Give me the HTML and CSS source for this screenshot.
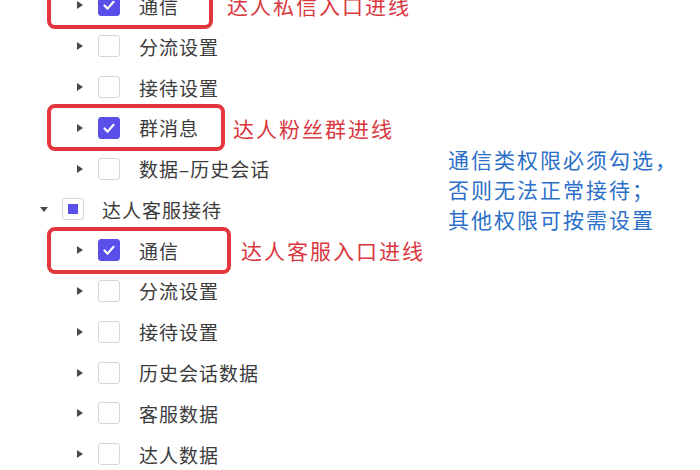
FILE: index.html
```html
<!DOCTYPE html>
<html>
<head>
  <meta charset="utf-8">
  <title>权限设置</title>
  <link rel="stylesheet" href="styles.css">
</head>
<body>
  <div class="page">
    <div class="tree">
      <div class="row child">
        <div class="item marked w-a">
          <span class="caret"></span>
          <span class="check on"><svg viewBox="0 0 22 22"><polyline points="6,11.5 9.5,15 16,7.5"/></svg></span>
          <span class="label">通信</span>
        </div>
        <span class="note gap-a">达人私信入口进线</span>
      </div>
      <div class="row child">
        <div class="item">
          <span class="caret"></span>
          <span class="check"></span>
          <span class="label">分流设置</span>
        </div>
      </div>
      <div class="row child">
        <div class="item">
          <span class="caret"></span>
          <span class="check"></span>
          <span class="label">接待设置</span>
        </div>
      </div>
      <div class="row child">
        <div class="item marked w-b">
          <span class="caret"></span>
          <span class="check on"><svg viewBox="0 0 22 22"><polyline points="6,11.5 9.5,15 16,7.5"/></svg></span>
          <span class="label">群消息</span>
        </div>
        <span class="note gap-b">达人粉丝群进线</span>
      </div>
      <div class="row child">
        <div class="item">
          <span class="caret"></span>
          <span class="check"></span>
          <span class="label">数据–历史会话</span>
        </div>
      </div>

      <div class="row parent">
        <span class="caret open"></span>
        <span class="check half"><i></i></span>
        <span class="label">达人客服接待</span>
      </div>

      <div class="row child">
        <div class="item marked w-c">
          <span class="caret"></span>
          <span class="check on"><svg viewBox="0 0 22 22"><polyline points="6,11.5 9.5,15 16,7.5"/></svg></span>
          <span class="label">通信</span>
        </div>
        <span class="note gap-c">达人客服入口进线</span>
      </div>
      <div class="row child">
        <div class="item">
          <span class="caret"></span>
          <span class="check"></span>
          <span class="label">分流设置</span>
        </div>
      </div>
      <div class="row child">
        <div class="item">
          <span class="caret"></span>
          <span class="check"></span>
          <span class="label">接待设置</span>
        </div>
      </div>
      <div class="row child">
        <div class="item">
          <span class="caret"></span>
          <span class="check"></span>
          <span class="label">历史会话数据</span>
        </div>
      </div>
      <div class="row child">
        <div class="item">
          <span class="caret"></span>
          <span class="check"></span>
          <span class="label">客服数据</span>
        </div>
      </div>
      <div class="row child">
        <div class="item">
          <span class="caret"></span>
          <span class="check"></span>
          <span class="label">达人数据</span>
        </div>
      </div>
    </div>

    <div class="tip">
      <p>通信类权限必须勾选，</p>
      <p>否则无法正常接待；</p>
      <p>其他权限可按需设置</p>
    </div>
  </div>
</body>
</html>
```

FILE: styles.css
```css
body {
  margin: 0;
  background-color: #ffffff;
  font-family: "Noto Sans CJK SC", "Noto Sans", sans-serif;
  overflow: hidden;
}

.page {
  display: flex;
  align-items: flex-start;
  height: 470px;
}

.tree {
  flex: none;
  width: 448px;
  margin-top: -15px;
}

.row {
  display: flex;
  align-items: center;
  height: 40.8px;
}

.row.child {
  padding-left: 47px;
}

.row.parent {
  padding-left: 40px;
}

/* every child row sits in a box; annotated rows get a red frame */
.item {
  display: flex;
  align-items: center;
  box-sizing: border-box;
  height: 47px;
  margin: -3px 0;
  padding-left: 26px;
  border: 4px solid transparent;
  border-radius: 8px;
}

.item.marked {
  border-color: #e3353d;
}

.w-a { width: 166px; }
.w-b { width: 178px; }
.w-c { width: 184px; }

.caret {
  flex: none;
  width: 0;
  height: 0;
  border-top: 4.5px solid transparent;
  border-bottom: 4.5px solid transparent;
  border-left: 6px solid #4a4a4a;
  margin-right: 15px;
}

.caret.open {
  border-left: 4px solid transparent;
  border-right: 4px solid transparent;
  border-top: 5px solid #4a4a4a;
  border-bottom: 0;
  margin-right: 14px;
}

.check {
  flex: none;
  box-sizing: border-box;
  width: 22px;
  height: 22px;
  border: 1px solid #d6d6d6;
  border-radius: 3px;
  background-color: #fff;
  display: flex;
  align-items: center;
  justify-content: center;
  margin-right: 19px;
}

.check.on {
  background-color: #5b4fe9;
  border-color: #5b4fe9;
}

.check svg {
  width: 22px;
  height: 22px;
}

.check polyline {
  fill: none;
  stroke: #fff;
  stroke-width: 2.4;
  stroke-linecap: round;
  stroke-linejoin: round;
}

.check.half i {
  display: block;
  width: 10px;
  height: 10px;
  background-color: #5b4fe9;
}

.parent .check {
  margin-right: 18px;
}

.label {
  font-size: 19px;
  letter-spacing: 1px;
  color: #3b3b3b;
  white-space: nowrap;
}

.note {
  font-size: 21px;
  letter-spacing: 2px;
  color: #d9383f;
  white-space: nowrap;
}

.gap-a { margin-left: 14px; }
.gap-b { margin-left: 8px; }
.gap-c { margin-left: 10px; }

.tip {
  margin-top: 144px;
}

.tip p {
  margin: 0;
  font-size: 21px;
  line-height: 30px;
  letter-spacing: 2px;
  color: #2b6fc8;
  white-space: nowrap;
}
```
